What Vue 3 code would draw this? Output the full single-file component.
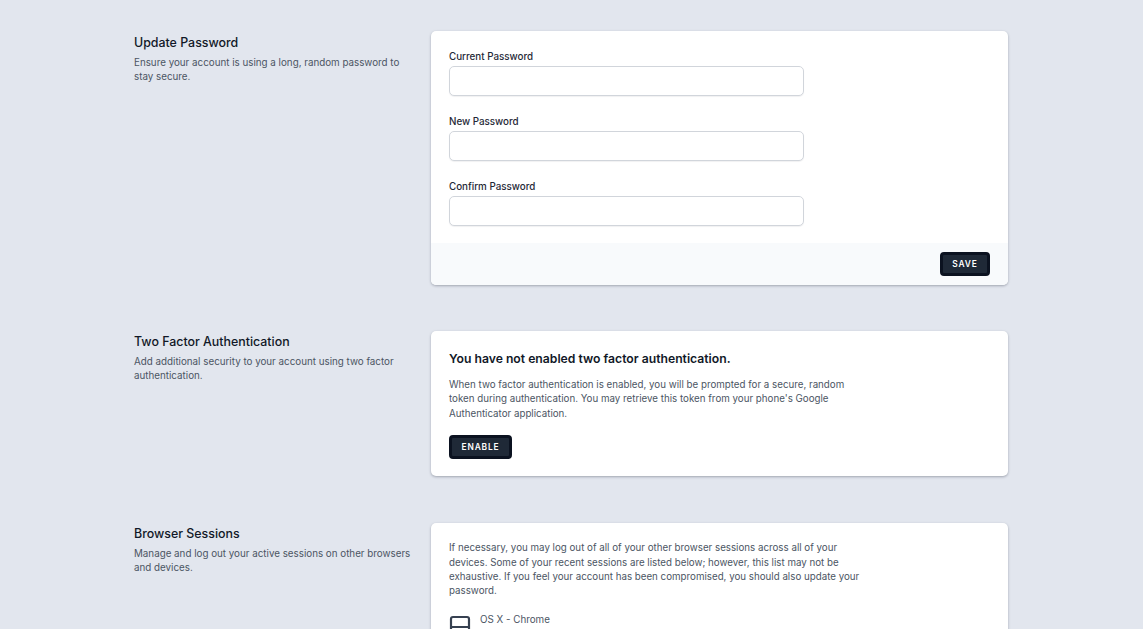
<script setup>
const sessionNote = 'If necessary, you may log out of all of your other browser sessions across all of your devices. Some of your recent sessions are listed below; however, this list may not be exhaustive. If you feel your account has been compromised, you should also update your password.'
const fields = ['Current Password', 'New Password', 'Confirm Password']
</script>

<template>
  <main class="page">
    <section class="row">
      <div class="intro first">
        <h2>Update Password</h2>
        <p>Ensure your account is using a long, random password to stay secure.</p>
      </div>
      <div class="card">
        <form class="form" @submit.prevent>
          <label v-for="f in fields" :key="f" class="field">
            <span>{{ f }}</span>
            <input type="password" />
          </label>
        </form>
        <div class="footer"><button class="btn">SAVE</button></div>
      </div>
    </section>

    <section class="row two">
      <div class="intro">
        <h2>Two Factor Authentication</h2>
        <p>Add additional security to your account using two factor authentication.</p>
      </div>
      <div class="card body">
        <h3>You have not enabled two factor authentication.</h3>
        <p class="copy narrow">When two factor authentication is enabled, you will be prompted for a secure, random token during authentication. You may retrieve this token from your phone's Google Authenticator application.</p>
        <button class="btn enable">ENABLE</button>
      </div>
    </section>

    <section class="row three">
      <div class="intro">
        <h2>Browser Sessions</h2>
        <p>Manage and log out your active sessions on other browsers and devices.</p>
      </div>
      <div class="card body sessions">
        <p class="copy wide">{{ sessionNote }}</p>
        <div class="session">
          <svg viewBox="0 0 24 24" fill="none" stroke="#374151" stroke-width="2.2" stroke-linecap="round" stroke-linejoin="round">
            <path d="M9.75 17L9 20l-1 1h8l-1-1-.75-3M3 13h18M5 17h14a2 2 0 002-2V5a2 2 0 00-2-2H5a2 2 0 00-2 2v10a2 2 0 002 2z" />
          </svg>
          <div class="device">OS X - Chrome</div>
        </div>
      </div>
    </section>
  </main>
</template>

<style>
html, body { margin: 0; height: 100%; overflow: hidden; background: #e2e6ee; }
</style>

<style scoped>
.page {
  box-sizing: border-box;
  height: 629px;
  overflow: hidden;
  padding: 31px 135px 0 134px;
  background: #e2e6ee;
  font-family: Inter, "Liberation Sans", sans-serif;
  color: #111827;
}
.row {
  display: grid;
  grid-template-columns: 280px 577px;
  column-gap: 17px;
  align-items: start;
}
.two { margin-top: 46px; }
.three { margin-top: 47px; }
.first { padding-top: 1px; }
h2 {
  margin: 2px 0 0;
  font-size: 12.4px;
  line-height: 17px;
  font-weight: 500;
  color: #111827;
}
.intro p {
  margin: 4.5px 0 0;
  font-size: 9.8px;
  line-height: 14.4px;
  color: #4b5563;
}
.card {
  background: #fff;
  border-radius: 5px;
  overflow: hidden;
  box-shadow: 0 1px 3px rgba(15, 23, 42, .22), 0 1px 2px rgba(15, 23, 42, .1);
}
.form {
  display: flex;
  flex-direction: column;
  gap: 19px;
  padding: 19px 18px 17px;
}
.field { display: block; }
.field span {
  display: block;
  font-size: 9.8px;
  line-height: 14px;
  font-weight: 500;
  color: #1f2937;
}
.field input {
  display: block;
  box-sizing: border-box;
  width: 355px;
  height: 30px;
  margin-top: 2px;
  border: 1px solid #d1d5db;
  border-radius: 5px;
  background: #fff;
  box-shadow: 0 1px 1px rgba(15, 23, 42, .06);
}
.footer {
  display: flex;
  justify-content: flex-end;
  padding: 9px 18px;
  background: #f8fafc;
}
.btn {
  box-sizing: border-box;
  height: 24px;
  width: 50px;
  padding: 0;
  border: 3px solid #0b1220;
  border-radius: 4px;
  background: #1f2937;
  color: #fff;
  font-family: inherit;
  font-size: 8.4px;
  font-weight: 600;
  letter-spacing: .1em;
}
.body { padding: 18px 18px 17px; box-sizing: border-box; }
h3 {
  margin: 1px 0 0;
  font-size: 12.2px;
  line-height: 17px;
  font-weight: 600;
  color: #111827;
}
.copy {
  margin: 0;
  font-size: 9.75px;
  line-height: 14.4px;
  color: #4b5563;
}
.narrow { margin-top: 11px; max-width: 405px; }
.wide { max-width: 415px; }
.enable {
  display: block;
  width: 63px;
  margin-top: 14px;
}
.sessions { height: 200px; }
.session {
  display: flex;
  gap: 8px;
  margin-top: 15px;
}
.session svg {
  flex: none;
  width: 24px;
  height: 24px;
  margin-left: -1px;
}
.device {
  margin-top: -1px;
  font-size: 9.8px;
  line-height: 14px;
  color: #4b5563;
}
</style>
